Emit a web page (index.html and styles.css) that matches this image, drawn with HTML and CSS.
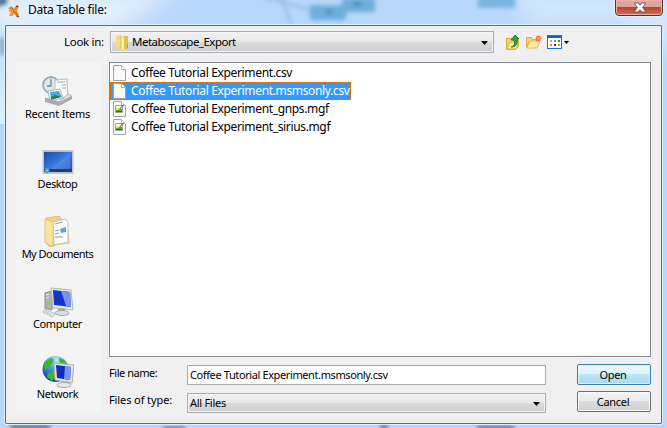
FILE: index.html
```html
<!DOCTYPE html>
<html lang="en">
<head>
<meta charset="utf-8">
<title>Data Table file:</title>
<link rel="stylesheet" href="styles.css">
</head>
<body>
<div class="window">
  <svg class="glass" width="667" height="428" viewBox="0 0 667 428" aria-hidden="true">
    <defs>
      <filter id="soft"><feGaussianBlur stdDeviation="2"/></filter>
      <filter id="wide" x="-50%" y="-50%" width="200%" height="200%"><feGaussianBlur stdDeviation="10"/></filter>
      <linearGradient id="edge" x2="0" y2="1"><stop stop-color="#c3ddf7"/><stop offset="1" stop-color="#e3f0fc"/></linearGradient>
    </defs>
    <path d="M-10 -10H180L110 35H-10Z" fill="#ecf5ff" opacity=".8" filter="url(#wide)"/>
    <path d="M510-8H680V60L620 25H530Z" fill="#d9ebff" opacity=".8" filter="url(#wide)"/>
    <path d="M0 40H5V124H0Z" fill="url(#edge)"/>
    <g filter="url(#soft)">
      <path d="M-4-3H7V4L-4 7Z" fill="#53738d"/>
      <path d="M0 38H5V55H0Z" fill="#83a9ca"/>
      <path d="M281-2L292 25M260-4L312 10" stroke="#8eb3d8" stroke-width="2" fill="none"/>
      <rect x="310" y="5" width="36" height="15" fill="#6eaedb"/><rect x="342" y="-2" width="33" height="14" fill="#6eaedb"/>
      <path d="M326 12h6M353 4h8" stroke="#496f91" stroke-width="3"/>
      <rect x="478" y="-5" width="37" height="13" fill="#78b5df"/>
      <path d="M163 429h22M10 427h40M380 427h8M477 428h37" stroke="#45617d" stroke-width="4"/>
    </g>
  </svg>
  <header class="titlebar">
    <svg class="app-icon" width="12" height="13" viewBox="0 0 12 13"><path d="M0 3l3-2 2 3 4-4 2 1-2 5 2 4-1 2-4-3-2 2H1l2-4-3-1 2-1z" fill="#f19434"/><path d="M5 6l4 3v3M4 2l1 3" stroke="#a8561d" stroke-width="1" fill="none"/><path d="M8 1l2 1M9 11l2 1" stroke="#6b2d23" stroke-width="1.2"/></svg>
    <span class="title">Data Table file:</span>
    <button class="close" aria-label="Close"><svg width="12" height="11" viewBox="0 0 12 11"><path d="M.8 1h3.4L6 3.2 7.8 1h3.4v1L8.6 5.5l2.6 3.5v1H7.8L6 7.8 4.2 10H.8V9l2.6-3.5L.8 2z" fill="#fff" stroke="#5b5560" stroke-width=".9"/></svg></button>
  </header>
  <main class="panel">
    <div class="lookup">
      <label class="look-label">Look in:</label>
      <div class="combo look-combo">
        <svg width="14" height="17" viewBox="0 0 14 17"><path d="M1 2l5-1v15l-5-2z" fill="#ecd57a"/><path d="M6 2h7v13H6z" fill="#dfbf55"/><path d="M1 2l5 1v13l-5-2z" fill="#f0dc85"/><path d="M6 1l3 2v13l-3-1z" fill="#fff1a3"/><path d="M6 2v13" stroke="#cda946" stroke-width=".6"/><path d="M12.5 10v4" stroke="#5eacdf"/></svg>
        <span>Metaboscape_Export</span><i class="arrow"></i>
      </div>
      <div class="tools">
        <svg width="14" height="16" viewBox="0 0 14 16"><path d="M.5 4.5h5l1 2h6v6l-3 3h-9z" fill="#f4d36a" stroke="#d9aa3c"/><path d="M1 15l3-7h9l-3 7z" fill="#ffefa2" stroke="#dfb344"/><path d="M5 13c4-1 4-4 3-7H5l4-5 4 4h-2c1 5-1 8-6 8z" fill="#32a333" stroke="#17701c" stroke-width=".8"/></svg>
        <svg width="16" height="14" viewBox="0 0 16 14"><path d="M.5 2.5h5l1 2h5v3h-9l-2 5z" fill="#f4d46e" stroke="#dfac3e"/><path d="M1 13l3-7h10l-3 7z" fill="#ffefad" stroke="#e8b653"/><circle cx="12.5" cy="3.5" r="2.4" fill="#f26135"/><path d="M12.5 .5v6M9.5 3.5h6M10.3 1.3l4.4 4.4M14.7 1.3l-4.4 4.4" stroke="#f26135" stroke-width=".8"/><circle cx="12.5" cy="3.5" r="1.2" fill="#ffc463"/></svg>
        <svg width="22" height="14" viewBox="0 0 22 14"><rect x=".5" y=".5" width="14" height="13" fill="#fff" stroke="#1674d2"/><path d="M1 1h13v2H1z" fill="#0767d1"/><path d="M3 5h2v2H3z" fill="#a7a6d4"/><path d="M7 5h2v2H7z" fill="#6395d8"/><path d="M11 5h2v2h-2z" fill="#20963e"/><path d="M3 9h2v2H3z" fill="#ef7448"/><path d="M7 9h2v2H7z" fill="#132e91"/><path d="M11 9h2v2h-2z" fill="#d4a51b"/><path d="M17 6h5l-2.5 3z" fill="#000"/></svg>
      </div>
    </div>
    <div class="content">
      <nav class="places">
        <div class="place">
          <svg width="32" height="32" viewBox="0 0 32 32"><circle cx="9" cy="9" r="8" fill="#dce9f0" stroke="#9dabb2" stroke-width="1.8"/><path d="M9 3v7H5" stroke="#6f8998" stroke-width="1.3" fill="none"/><path d="M13 4l12-1 1 20-13-2z" fill="#fcfcfa" stroke="#bbb"/><path d="M15 6h8M20 9h4M20 12h4" stroke="#8aa8ba"/><path d="M6 15l12-2 3 9-13 3z" fill="#f8fbff" stroke="#abb9c0"/><path d="M8 16l9-1 3 6-11 2z" fill="#48a7e2"/><path d="M9 21l4-2 6 2-10 3z" fill="#2c754e"/><path d="M3 22l14 4 9-8 4 2-13 8z" fill="#e4e5e2" stroke="#999b99" stroke-width=".7"/><path d="M3 22l14 4v4L3 26zM17 26l13-6v3l-13 7z" fill="#aaaca9"/></svg>
          <span class="recent">Recent Items</span>
        </div>
        <div class="place">
          <svg width="32" height="32" viewBox="0 0 32 32"><defs><linearGradient id="desk" x2="1" y2="1"><stop stop-color="#184ba9"/><stop offset=".5" stop-color="#3979df"/><stop offset="1" stop-color="#2351a3"/></linearGradient></defs><rect x="1" y="4.5" width="30" height="23" fill="#b6bec8" stroke="#c4c8cf"/><rect x="2" y="6" width="28" height="20" fill="url(#desk)"/><path d="M9 23L28 7v16z" fill="#71a8fa" opacity=".35"/><path d="M2 23h28v3H2z" fill="#263c60"/><circle cx="5" cy="24.5" r="2.5" fill="#37a9dd"/><path d="M4 24h2v1H4z" fill="#f3c94a"/></svg>
          <span class="desktop">Desktop</span>
        </div>
        <div class="place">
          <svg width="32" height="32" viewBox="0 0 32 32"><path d="M4 2l13-2 2 2v25L8 31l-5-5z" fill="#eed681" stroke="#dfc273"/><path d="M12 5h13l3 23-17 1z" fill="#ecd27d"/><path d="M11 6l12-3 3 3v20l-14 3z" fill="#fff" stroke="#aec4cf"/><path d="M13 8l8-2M13 15l4-1M13 18l4-1M13 21h8" stroke="#7a9eae"/><path d="M18 13l6-2v5l-5 1z" fill="#55a9c5"/><path d="M3 3l8 3v25l-8-5z" fill="#fae5a0" stroke="#e3c571"/></svg>
          <span class="documents">My Documents</span>
        </div>
        <div class="place">
          <svg width="32" height="32" viewBox="0 0 32 32"><path d="M3 7l7-2v19l-7-2z" fill="#aeb3b3" stroke="#888f92"/><path d="M4 9l3-1M4 12l3-1" stroke="#eef"/><circle cx="6" cy="17" r="1.2" fill="#5ee51c"/><path d="M9 2l20 2 2 20-20-2z" fill="#e8ece9" stroke="#afb6b4"/><path d="M11 4l17 2 1 15-17-2z" fill="#1232c8"/><path d="M19 5l9 1 1 15-5-1z" fill="#7992e8"/><path d="M16 22h7v4h-7z" fill="#a9acac"/><ellipse cx="20" cy="27" rx="7" ry="2.5" fill="#ddd" stroke="#aaa"/><path d="M3 23l10 5-3 3L1 26z" fill="#f1f2f0" stroke="#b6bab7"/><path d="M3 25l7 4" stroke="#b8bdbd"/></svg>
          <span class="computer">Computer</span>
        </div>
        <div class="place">
          <svg width="32" height="32" viewBox="0 0 32 32"><defs><radialGradient id="globe" cx=".55" cy=".15" r=".8"><stop stop-color="#c5ecff"/><stop offset=".4" stop-color="#4aafdb"/><stop offset="1" stop-color="#124ca4"/></radialGradient></defs><circle cx="13.5" cy="13" r="13" fill="url(#globe)"/><path d="M2 8l7-6 3 2-2 4-3 2-4 5zM6 17l6-2 2 5-4 5-5-4zM17 2l5 2 2 4-4 1-3-4z" fill="#3db628"/><path d="M12 7l20 2-2 18-17-3z" fill="#e5e5df" stroke="#aaa"/><path d="M14 9l15 2-1 13-13-2z" fill="#102bbd"/><path d="M23 10l6 1-1 13-6-1z" fill="#7395ec"/><path d="M20 25h6v3h-6z" fill="#b5b6b5"/><ellipse cx="22" cy="29" rx="7" ry="2.5" fill="#e8e8e7" stroke="#aaa"/></svg>
          <span class="network">Network</span>
        </div>
      </nav>
      <section class="right">
        <svg width="0" height="0" class="symbols"><defs>
          <symbol id="page" viewBox="0 0 13 16"><path d="M.5.5h8l4 4v11H.5z" fill="#fafafa" stroke="#a2a2a2"/><path d="M8.5.5v4h4" fill="#fff" stroke="#b1b1b1"/></symbol>
          <symbol id="mgf" viewBox="0 0 13 16"><path d="M.5.5h8l4 4v11H.5z" fill="#fafafa" stroke="#a2a2a2"/><path d="M8.5.5v4h4" fill="#fff" stroke="#b1b1b1"/><path d="M2.5 4.5h7v7h-7z" fill="#f6f8ec" stroke="#9ca19a"/><path d="M3 8h6v3H3z" fill="#57ac2d"/><path d="M3 10h6v1H3z" fill="#256c25"/><path d="M3 7h3v2H3z" fill="#efe073"/><path d="M6.5 8.5l4-5" stroke="#6b5330"/></symbol>
        </defs></svg>
        <div class="files">
          <div class="file"><svg width="13" height="16"><use href="#page"/></svg><span>Coffee Tutorial Experiment.csv</span></div>
          <div class="file selected"><svg width="13" height="16"><use href="#page"/></svg><span>Coffee Tutorial Experiment.msmsonly.csv</span></div>
          <div class="file"><svg width="13" height="16"><use href="#mgf"/></svg><span>Coffee Tutorial Experiment_gnps.mgf</span></div>
          <div class="file"><svg width="13" height="16"><use href="#mgf"/></svg><span>Coffee Tutorial Experiment_sirius.mgf</span></div>
        </div>
        <div class="form">
          <div class="labels"><label class="fn">File name:</label><label class="ft">Files of type:</label></div>
          <div class="fields"><div class="input">Coffee Tutorial Experiment.msmsonly.csv</div><div class="combo type-combo"><span>All Files</span><i class="arrow"></i></div></div>
          <div class="buttons"><button class="open">Open</button><button class="cancel">Cancel</button></div>
        </div>
      </section>
    </div>
  </main>
</div>
</body>
</html>
```

FILE: styles.css
```css
* { box-sizing: border-box; }
body { margin: 0; font: 12px/18px "Noto Sans", sans-serif; color: #000; overflow: hidden; }
span, label { white-space: nowrap; }
svg { display: block; flex: none; }
.window { position: relative; width: 667px; height: 428px; overflow: hidden; background: #b8d8fb; }
.glass { position: absolute; left: 0; top: 0; }
.titlebar { position: relative; height: 25px; display: flex; align-items: flex-start; }
.app-icon { margin: 5px 0 0 8px; }
.title { margin: 1px 0 0 8px; letter-spacing: -.26px; }
.close { width: 48px; height: 17px; margin: -1px 4px 0 auto; padding: 0 0 1px 1px; border: 1px solid #522c31; border-radius: 0 0 4px 4px; display: flex; justify-content: center; align-items: center; background: linear-gradient(#dfa499 0 45%, #bb432e 50%, #cf6c54); box-shadow: inset 0 0 0 1px #edb3a8, 0 0 0 1px #e4f1fd; }
.panel { position: relative; width: 657px; height: 399px; margin-left: 5px; border: 1px solid #596d80; border-radius: 1px; background: #f0f0f0; box-shadow: 0 0 0 1px #dcefff; }
.lookup { display: flex; height: 36px; align-items: flex-start; }
.look-label { width: 46px; margin: 7px 0 0 58px; font-size: 11.5px; letter-spacing: -.3px; }
.combo { display: flex; align-items: center; border: 1px solid #a9abb2; box-shadow: inset 0 0 0 1px #f7f7f7; background: linear-gradient(#f2f2f2, #e8e8e8 48%, #dbdbdb 50%, #cecece); }
.look-combo { width: 384px; height: 22px; margin-top: 5px; padding-left: 4px; }
.look-combo span { margin-left: 3px; font-size: 11.5px; letter-spacing: -.52px; }
.arrow { margin: 2px 5px 0 auto; width: 7px; height: 4px; background: #000; clip-path: polygon(0 0, 100% 0, 50% 100%); }
.tools { display: flex; align-items: center; margin: 8px 0 0 12px; height: 16px; gap: 6px; }
.tools svg:nth-child(3) { margin-left: -1px; }
.content { display: flex; }
.places { width: 85px; height: 351px; margin: 0 8px 0 10px; padding-top: 14px; background: #f4f4f4; }
.place { height: 70px; display: flex; flex-direction: column; align-items: center; padding-right: 2px; }
.place span { line-height: 15px; font-size: 11px; margin-top: -2px; letter-spacing: -.4px; }
.place .recent { letter-spacing: -.2px; }
.place .documents { letter-spacing: -.5px; }
.right { width: 542px; }
.symbols { position: absolute; }
.files { height: 295px; border: 1px solid #828790; background: #fff; padding-top: 1px; }
.file { width: max-content; height: 18px; display: flex; align-items: center; padding: 0 1px 0 3px; gap: 5px; letter-spacing: -.35px; }
.selected {
  color: #fff;
  background:
    repeating-linear-gradient(90deg, #d9730f 0 1px, #3399ff 1px 2px) top / 100% 1px no-repeat,
    repeating-linear-gradient(90deg, #d9730f 0 1px, #3399ff 1px 2px) bottom / 100% 1px no-repeat,
    repeating-linear-gradient(#d9730f 0 1px, #3399ff 1px 2px) left / 1px 100% no-repeat,
    repeating-linear-gradient(#d9730f 0 1px, #3399ff 1px 2px) right / 1px 100% no-repeat,
    #3399ff;
}
.form { display: flex; height: 55px; padding-top: 7px; }
.labels { width: 78px; display: flex; flex-direction: column; gap: 9px; }
.labels label { font-size: 11px; }
.labels .fn { letter-spacing: -.45px; }
.labels .ft { letter-spacing: -.1px; }
.fields { width: 359px; display: flex; flex-direction: column; gap: 8px; margin-top: 1px; }
.input { height: 20px; padding-left: 2px; border: 1px solid #a9abb2; background: #fff; font-size: 11px; white-space: nowrap; letter-spacing: -.39px; }
.type-combo { height: 20px; padding-left: 2px; font-size: 11px; letter-spacing: -.28px; }
.buttons { width: 74px; margin-left: 31px; display: flex; flex-direction: column; gap: 6px; }
.buttons button { height: 21px; padding: 0 2px 1px 0; font: 11px/17px "Noto Sans", sans-serif; letter-spacing: -.3px; border: 1px solid #707070; border-radius: 2px; background: linear-gradient(#f2f2f2, #ebebeb 48%, #dcdcdc 50%, #cfcfcf); box-shadow: inset 0 0 0 1px #f9f9f9; }
.buttons .open { border-color: #3c7fb1; background: linear-gradient(#eef8fd, #dff2fc 48%, #bfe5f8 50%, #a9d9f1); box-shadow: inset 0 0 0 1px #d7f3ff; }
```
